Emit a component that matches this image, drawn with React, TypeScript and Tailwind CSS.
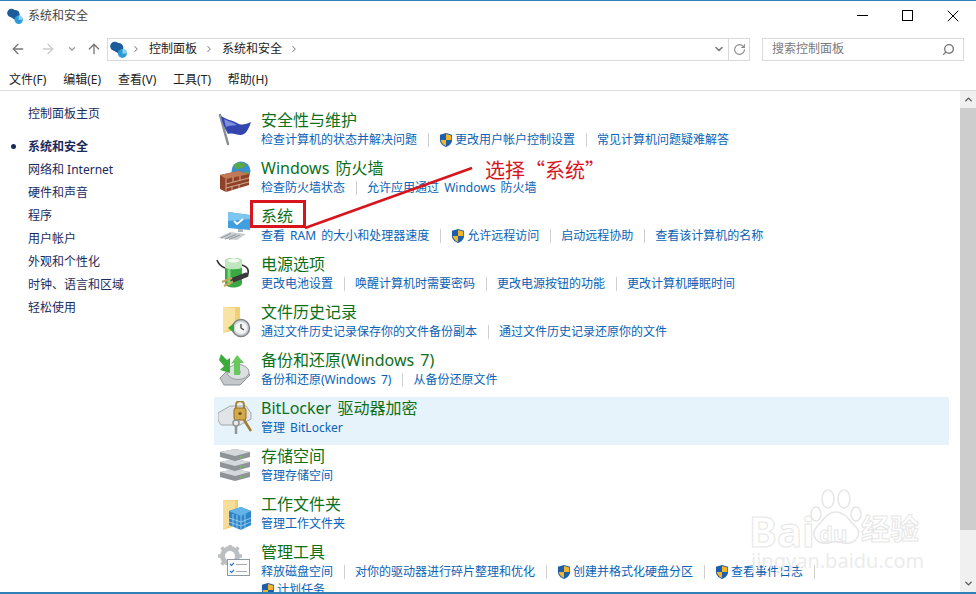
import { ReactNode } from 'react';
import { ArrowLeft, ArrowRight, ArrowUp, ChevronDown, ChevronRight, ChevronUp, RotateCw, Search, X } from 'lucide-react';

const sidebarItems = ['网络和 Internet', '硬件和声音', '程序', '用户帐户', '外观和个性化', '时钟、语言和区域', '轻松使用'];

function Shield() {
  return (
    <svg width="14" height="16" viewBox="0 0 15 16" className="mr-[2px] shrink-0">
      <path d="M7.5.5 14 2.5V8c0 3.6-3 6.2-6.5 7.5C4 14.200 1 11.600 1 8V2.500z" fill="#1f5fa8" />
      <path d="M7.500 1.500V8H13.200V3.200zM7.500 8H1.900C2.200 10.800 4.500 13.100 7.500 14.400z" fill="#f3b52b" />
    </svg>
  );
}

function CpIcon({ size = 16 }: { size?: number }) {
  return (
    <svg width={size} height={size} viewBox="0 0 16 16" className="shrink-0">
      <circle cx="4.500" cy="5" r="4.300" fill="#1c5c9a" />
      <circle cx="8" cy="6.500" r="4.600" fill="#1c5c9a" />
      <path d="M4 8 9 13 12 8z" fill="#1c5c9a" />
      <circle cx="11.700" cy="11.700" r="4.200" fill="#2c9bd8" />
      <path d="M11.700 11.700V7.500a4.200 4.200 0 0 1 4.200 4.200z" fill="#8ed2f2" />
    </svg>
  );
}

function FlagIcon() {
  return (
    <svg width="34" height="34" viewBox="0 0 34 34">
      <path d="M2 2 10 31" stroke="#8a8f96" strokeWidth="2.500" strokeLinecap="round" />
      <path d="M3 3C9 7 14 7 19 10 24 13 28 11 33 9 31 15 29 19 26 21 21 24 16 19 10 21 7 16 4 9 3 3z" fill="#3346b0" />
      <path d="M6 6C11 9 15 9 19 12 15 13 11 12 8 14z" fill="#7f8fe0" />
    </svg>
  );
}

function FirewallIcon() {
  return (
    <svg width="34" height="34" viewBox="0 0 34 34">
      <circle cx="23" cy="10" r="9.500" fill="#3a8fd0" />
      <path d="M16 4c3-3 8-3 11-1 1 3-3 5-5 4-2 2-5 2-6-3zM27 11c2-1 4 0 5 2-1 3-3 5-5 5-1-2-1-5 0-7z" fill="#58a846" />
      <path d="M2 14 20 10 31 13V24L8 31 2 28z" fill="#8f4228" />
      <path d="M2 14 20 10 31 13 8 18z" fill="#c07a58" />
      <path d="M8 18V31M8 23 31 17M8 27 31 21M15 16V21M22 15V19M14 25V29M21 23V27" stroke="#d3ab94" strokeWidth="1" fill="none" />
    </svg>
  );
}

function SystemIcon() {
  return (
    <svg width="34" height="34" viewBox="0 0 34 34">
      <path d="M10 3 32 6V21L10 19z" fill="#3f9fe0" />
      <path d="M10 3 32 6V10L10 12z" fill="#7cc6f2" />
      <path d="M16 12l3 3 6-5" stroke="#fff" strokeWidth="1.800" fill="none" />
      <path d="M20 20v3h5v-3z" fill="#b0b5ba" />
      <path d="M0 29 12 23 28 25 19 31z" fill="#c9ced2" />
      <path d="M3 29 13 24.500M7 30 18 25.500M11 30.500 22 26" stroke="#8f959a" strokeWidth="1" />
    </svg>
  );
}

function PowerIcon() {
  return (
    <svg width="34" height="34" viewBox="0 0 34 34" className="overflow-visible">
      <path d="M-1 3C0 6 2 9 7 11M24 8C28 9 31 12 30 17" stroke="#333" strokeWidth="1.600" fill="none" />
      <path d="M7 4C7 0 24 0 24 4V26C24 32 7 32 7 26z" fill="#3aa845" />
      <path d="M7 4C7 0 24 0 24 4V10C24 13 7 13 7 10z" fill="#bfe5bd" />
      <ellipse cx="15.500" cy="3.500" rx="6" ry="2" fill="#f1faef" />
      <path d="M11 12V28" stroke="#7fd67f" strokeWidth="3" />
      <path d="M28 18 15 23" stroke="#3a3a3a" strokeWidth="5" strokeLinecap="round" />
      <path d="M14 21 4 25M15 24.500 6 29" stroke="#c7a65a" strokeWidth="2" />
    </svg>
  );
}

function FolderClockIcon() {
  return (
    <svg width="34" height="34" viewBox="0 0 34 34">
      <path d="M5 2H22V24L5 28z" fill="#f0cf75" />
      <path d="M5 2 17 3V21L5 28z" fill="#f8e3a4" />
      <circle cx="23" cy="23" r="8.500" fill="#cfd4d6" stroke="#7e8488" strokeWidth="1.500" />
      <circle cx="23" cy="23" r="6" fill="#f4f6f6" />
      <path d="M23 19v4l3 2" stroke="#444" strokeWidth="1.300" fill="none" />
      <path d="M10 23l6-5v10z" fill="#37a53c" />
    </svg>
  );
}

function BackupIcon() {
  return (
    <svg width="34" height="34" viewBox="0 0 34 34">
      <path d="M2 25 13 14H26L32 22 22 32H6z" fill="#c4c8cb" stroke="#8c9194" strokeWidth="1" />
      <ellipse cx="20" cy="19" rx="11" ry="7.500" fill="#dde0e2" stroke="#9a9ea1" strokeWidth="1" />
      <ellipse cx="20" cy="19" rx="3" ry="2" fill="#a0a4a7" />
      <path d="M3 1 9 7 12 5 12 20 2 17 6 13 1 7z" fill="#3dab3c" />
      <path d="M16 22V10L13 11 19 2 26 10 22 10V22z" fill="#68c85c" />
    </svg>
  );
}

function BitLockerIcon() {
  return (
    <svg width="34" height="34" viewBox="0 0 34 34">
      <path d="M0 12 12 5H28L33 12V18L22 24H3L0 19z" fill="#e2e5e7" stroke="#a3a8ab" strokeWidth="1" />
      <path d="M18 8V4C18 -1 26 -1 26 4V8" stroke="#a88432" strokeWidth="2" fill="none" />
      <rect x="16" y="7" width="12" height="12" rx="2" fill="#d4a94a" stroke="#8d6c22" strokeWidth="1" />
      <circle cx="22" cy="12.500" r="1.600" fill="#6b5118" />
      <circle cx="18" cy="22" r="3" fill="#e8eaeb" stroke="#8f9497" strokeWidth="1.500" />
      <path d="M18 25V33" stroke="#8f9497" strokeWidth="2.500" />
      <path d="M26 19 33 30" stroke="#a07d2c" strokeWidth="2.500" />
    </svg>
  );
}

function StorageIcon() {
  const disk = (y: number) => (
    <g key={y}>
      <path d={`M2 ${y + 3} 17 ${y} 32 ${y + 3}V${y + 8}L17 ${y + 12} 2 ${y + 8}z`} fill="#8d9396" />
      <path d={`M2 ${y + 3} 17 ${y} 32 ${y + 3} 17 ${y + 7}z`} fill="#d5d8da" />
      <rect x="22" y={y + 7} width="2" height="2" fill="#6cc24a" />
    </g>
  );
  return (
    <svg width="34" height="34" viewBox="0 0 34 34">
      {[20, 10, 0].map(disk)}
    </svg>
  );
}

function WorkFolderIcon() {
  return (
    <svg width="34" height="34" viewBox="0 0 34 34">
      <path d="M5 3H20V28L5 33z" fill="#f0cf75" />
      <path d="M5 3 17 4V24L5 33z" fill="#f6de9a" />
      <path d="M11 14 23 10 33 14V28L23 33 11 28z" fill="#2e86c8" />
      <path d="M11 14 23 10 33 14 23 19z" fill="#62b3e8" />
      <path d="M23 19V33M15 17V30M19 18V31M27 17V31M11 21 23 25 33 21M11 25 23 29 33 25" stroke="#a5d4f2" strokeWidth=".8" fill="none" />
    </svg>
  );
}

function ToolsIcon() {
  return (
    <svg width="34" height="34" viewBox="0 0 34 34">
      <circle cx="12" cy="11" r="7.500" fill="none" stroke="#bcbfc1" strokeWidth="5" />
      <path d="M12 0v4M12 19v4M0 11h4M20 11h4M3.500 2.500l3 3M17.500 16.500l3 3M3.500 19.500l3-3M17.500 5.500l3-3" stroke="#bcbfc1" strokeWidth="3.500" />
      <rect x="9.500" y="14.500" width="22" height="16" fill="#fdfdfd" stroke="#8d9aa6" strokeWidth="1" />
      <path d="M12 19l1.500 1.500 2.500-2.500M12 26l1.500 1.500 2.500-2.500" stroke="#2b79bd" strokeWidth="1.200" fill="none" />
      <path d="M18 19.500h11M18 26.500h11" stroke="#a7adb2" strokeWidth="1" />
    </svg>
  );
}

type Link = { text: string; shield?: boolean };
type Row = { title: string; icon: ReactNode; links: Link[]; extra?: Link; highlight?: boolean };

const rows: Row[] = [
  {
    title: '安全性与维护',
    icon: <FlagIcon />,
    links: [{ text: '检查计算机的状态并解决问题' }, { text: '更改用户帐户控制设置', shield: true }, { text: '常见计算机问题疑难解答' }],
  },
  {
    title: 'Windows 防火墙',
    icon: <FirewallIcon />,
    links: [{ text: '检查防火墙状态' }, { text: '允许应用通过 Windows 防火墙' }],
  },
  {
    title: '系统',
    icon: <SystemIcon />,
    links: [
      { text: '查看 RAM 的大小和处理器速度' },
      { text: '允许远程访问', shield: true },
      { text: '启动远程协助' },
      { text: '查看该计算机的名称' },
    ],
  },
  {
    title: '电源选项',
    icon: <PowerIcon />,
    links: [{ text: '更改电池设置' }, { text: '唤醒计算机时需要密码' }, { text: '更改电源按钮的功能' }, { text: '更改计算机睡眠时间' }],
  },
  {
    title: '文件历史记录',
    icon: <FolderClockIcon />,
    links: [{ text: '通过文件历史记录保存你的文件备份副本' }, { text: '通过文件历史记录还原你的文件' }],
  },
  {
    title: '备份和还原(Windows 7)',
    icon: <BackupIcon />,
    links: [{ text: '备份和还原(Windows 7)' }, { text: '从备份还原文件' }],
  },
  { title: 'BitLocker 驱动器加密', icon: <BitLockerIcon />, links: [{ text: '管理 BitLocker' }], highlight: true },
  { title: '存储空间', icon: <StorageIcon />, links: [{ text: '管理存储空间' }] },
  { title: '工作文件夹', icon: <WorkFolderIcon />, links: [{ text: '管理工作文件夹' }] },
  {
    title: '管理工具',
    icon: <ToolsIcon />,
    links: [
      { text: '释放磁盘空间' },
      { text: '对你的驱动器进行碎片整理和优化' },
      { text: '创建并格式化硬盘分区', shield: true },
      { text: '查看事件日志', shield: true },
    ],
    extra: { text: '计划任务', shield: true },
  },
];

function PanelRow({ row }: { row: Row }) {
  return (
    <div className={`flex h-12 shrink-0 w-[735px] pl-1 ${row.highlight ? 'bg-[#e6f3fb]' : ''}`}>
      <div className="w-[32px] pt-[4px] shrink-0">{row.icon}</div>
      <div className="ml-[11px] min-w-0 [word-spacing:2px]">
        <div className="h-[22px] leading-[22px] text-[16px] text-[#0d7019] whitespace-nowrap">{row.title}</div>
        <div className="flex items-center h-[18px] text-[12px] text-[#0a62b5] whitespace-nowrap">
          {row.links.map((link, i) => (
            <div key={link.text} className="flex items-center">
              {i > 0 && <span className="w-px h-[14px] bg-[#cfcfcf] ml-[11px] mr-[10px]" />}
              {link.shield && <Shield />}
              <span>{link.text}</span>
            </div>
          ))}
          {row.extra && <span className="w-px h-[14px] bg-[#cfcfcf] ml-[11px]" />}
        </div>
        {row.extra && (
          <div className="flex items-center h-[18px] text-[12px] text-[#0a62b5] whitespace-nowrap">
            <Shield />
            {row.extra.text}
          </div>
        )}
      </div>
    </div>
  );
}

export default function App() {
  return (
    <div className="relative w-[976px] h-[594px] overflow-hidden bg-white flex flex-col font-['Noto_Sans','Noto_Sans_CJK_SC',sans-serif] text-[12px]">
      <div className="h-px bg-[#2f7fb8] shrink-0" />
      {/* title bar */}
      <div className="h-[29px] shrink-0 flex items-center pl-[7px] text-[#333]">
        <CpIcon />
        <span className="ml-[5px] text-[#444]">系统和安全</span>
        <div className="ml-auto flex items-center pr-[13px] text-black">
          <span className="w-[11px] h-px bg-black" />
          <span className="ml-[34px] w-[11px] h-[11px] border border-black" />
          <X size={20} strokeWidth={1.200} className="ml-[30px]" />
        </div>
      </div>
      {/* address row */}
      <div className="h-[37px] shrink-0 flex items-center pl-[10px] pt-[1px] text-[#999]">
        <ArrowLeft size={16} className="text-[#777]" />
        <ArrowRight size={16} className="ml-[14px] text-[#ccc]" />
        <ChevronDown size={10} className="ml-[11px] text-[#999]" strokeWidth={3} />
        <ArrowUp size={16} className="ml-[9px] text-[#777]" />
        <div className="ml-[5px] w-[643px] h-[23px] border border-[#d9d9d9] flex items-center pl-[2px]">
          <CpIcon size={17} />
          <ChevronRight size={10} className="ml-[4px] text-[#888]" strokeWidth={2.500} />
          <span className="ml-[8px] text-[#222]">控制面板</span>
          <ChevronRight size={10} className="ml-[7px] text-[#888]" strokeWidth={2.500} />
          <span className="ml-[8px] text-[#222]">系统和安全</span>
          <ChevronRight size={10} className="ml-[7px] text-[#888]" strokeWidth={2.500} />
          <ChevronDown size={12} className="ml-auto mr-[3px] text-[#777]" strokeWidth={3} />
          <div className="w-[21px] h-full border-l border-[#d9d9d9] flex items-center justify-center">
            <RotateCw size={13} className="text-[#888]" strokeWidth={2} />
          </div>
        </div>
        <div className="ml-[12px] w-[202px] h-[23px] border border-[#d9d9d9] flex items-center pl-[9px] pr-[8px] text-[#7a7a7a]">
          <span>搜索控制面板</span>
          <Search size={13} className="ml-auto text-[#777] -scale-x-100" strokeWidth={2.500} />
        </div>
      </div>
      {/* menu */}
      <div className="h-[21px] shrink-0 flex items-center pt-[2px] pl-[9px] gap-[16.800px] text-[#222] border-b border-[#dcdcdc] box-content">
        <span>文件(F)</span>
        <span>编辑(E)</span>
        <span>查看(V)</span>
        <span>工具(T)</span>
        <span>帮助(H)</span>
      </div>
      {/* body */}
      <div className="flex-1 min-h-0 flex">
        <nav className="w-[214px] shrink-0 pl-[28px] pt-[14px] text-[#1a2b5c]">
          <div className="h-[18px] leading-[18px]">控制面板主页</div>
          <div className="relative mt-[15px] h-[23px] leading-[18px] font-bold">
            <span className="absolute left-[-17px] top-[6px] w-[5px] h-[5px] rounded-full bg-[#1a2b5c]" />
            系统和安全
          </div>
          {sidebarItems.map(item => (
            <div key={item} className="h-[23px] leading-[18px]">
              {item}
            </div>
          ))}
        </nav>
        <main className="flex-1 min-w-0 pt-[18px] flex flex-col overflow-hidden">
          {rows.map(row => (
            <PanelRow key={row.title} row={row} />
          ))}
        </main>
        <div className="w-4 shrink-0 flex flex-col bg-[#f0f0f0] text-[#555]">
          <div className="h-[17px] flex items-center justify-center">
            <ChevronUp size={11} strokeWidth={3} />
          </div>
          <div className="h-[422px] bg-[#cdcdcd]" />
          <div className="mt-auto h-[17px] flex items-center justify-center">
            <ChevronDown size={11} strokeWidth={3} />
          </div>
        </div>
      </div>
      <div className="h-[2px] shrink-0 bg-[#2f7fb8]" />

      {/* red note over the system row */}
      <div className="absolute left-[250px] top-[200px] w-[56px] h-[28px] border-[3px] border-[#d8141c]" />
      <svg className="absolute left-0 top-0 pointer-events-none" width="976" height="594">
        <line x1="305" y1="228" x2="472" y2="168" stroke="#d8141c" strokeWidth="2.500" />
      </svg>
      <div lang="zh-CN" className="absolute left-[485px] top-[157px] text-[20px] leading-[26px] text-[#d8141c] whitespace-nowrap font-['Noto_Sans_CJK_SC',sans-serif]">
        选择“系统”
      </div>

      {/* watermark */}
      <div className="absolute left-[749px] top-[506px] text-[42px] leading-[50px] font-bold text-white/60 [-webkit-text-stroke:1px_#e6e6e6] pointer-events-none">Bai</div>
      <svg className="absolute left-[808px] top-[488px] pointer-events-none" width="56" height="58" viewBox="0 0 56 58" fill="none" stroke="#e6e6e6" strokeWidth="1.500">
        <ellipse cx="8" cy="26" rx="5" ry="7" />
        <ellipse cx="20" cy="11" rx="6" ry="9" />
        <ellipse cx="36" cy="11" rx="6" ry="9" />
        <ellipse cx="48" cy="26" rx="5" ry="7" />
        <path d="M28 24C38 24 42 34 49 40 54 48 46 57 36 55 30 53 26 53 20 55 10 57 2 48 8 40 14 34 18 24 28 24z" />
      </svg>
      <div className="absolute left-[819px] top-[520px] text-[22px] leading-[26px] font-bold text-white/60 [-webkit-text-stroke:1px_#e6e6e6] pointer-events-none">du</div>
      <div className="absolute left-[861px] top-[511px] text-[29px] leading-[36px] font-bold text-white/60 [-webkit-text-stroke:1px_#e6e6e6] whitespace-nowrap pointer-events-none">经验</div>
      <div className="absolute left-[751px] top-[549px] text-[20px] leading-[24px] text-[#ececec] whitespace-nowrap pointer-events-none">jingyan.baidu.com</div>
    </div>
  );
}
